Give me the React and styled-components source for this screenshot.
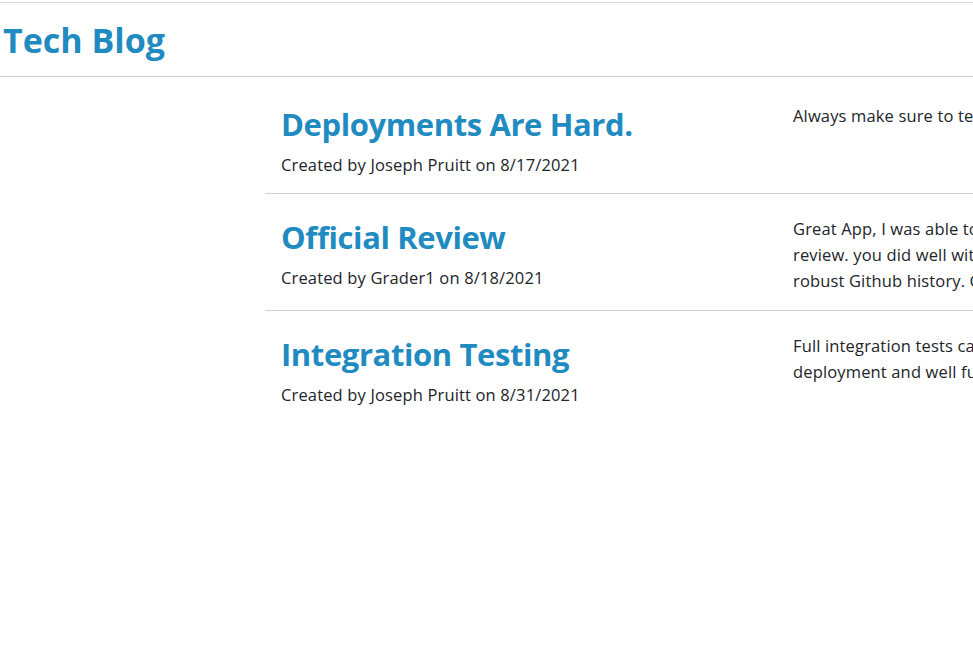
import React from "react";
import styled, { createGlobalStyle } from "styled-components";

const Global = createGlobalStyle`
  html, body { margin: 0; padding: 0; overflow: hidden; background: #fff; }
  body { font-family: "Open Sans", "Noto Sans", sans-serif; color: #212529; }
`;

const Page = styled.div`
  width: 1300px;
  padding-top: 2px;
`;

const Header = styled.header`
  border-top: 1px solid #dcdcdc;
  border-bottom: 1px solid #d0d0d0;
  height: 73px;
  display: flex;
  align-items: center;
  padding-left: 3px;
`;

const Brand = styled.h1`
  margin: 0;
  font-size: 34px;
  font-weight: 700;
  color: #1f8bc1;
`;

const Main = styled.main`
  display: flex;
  margin-top: 4px;
`;

const Sidebar = styled.aside`
  width: 265px;
  flex: none;
`;

const List = styled.section`
  flex: 1;
`;

const Row = styled.article`
  display: grid;
  grid-template-columns: 496px 1fr;
  column-gap: 16px;
  padding: 18px 16px 16px;
  border-bottom: ${(p) => (p.$last ? "none" : "1px solid #d0d0d0")};
`;

const Title = styled.h2`
  margin: 6px 0 0;
  font-size: 31px;
  line-height: 38px;
  font-weight: 700;
  color: #1f8bc1;
  letter-spacing: -0.4px;
`;

const Meta = styled.p`
  margin: 10px 0 0;
  font-size: 16.5px;
  line-height: 24px;
  letter-spacing: 0.15px;
`;

const Body = styled.p`
  margin: 4px 0 0;
  font-size: 16.5px;
  line-height: 26px;
  letter-spacing: 0.15px;
  width: 484px;
`;

const posts = [
  {
    title: "Deployments Are Hard.",
    author: "Joseph Pruitt",
    date: "8/17/2021",
    body: "Always make sure to test your deployments.",
  },
  {
    title: "Official Review",
    author: "Grader1",
    date: "8/18/2021",
    body: "Great App, I was able to navigate all of the pages during my review. you did well with all of the functionality and have a robust Github history. Great job!",
  },
  {
    title: "Integration Testing",
    author: "Joseph Pruitt",
    date: "8/31/2021",
    body: "Full integration tests can save you a lot of time during deployment and well functioning code.",
  },
];

export default function App() {
  return (
    <>
      <Global />
      <Page>
        <Header>
          <Brand>Tech Blog</Brand>
        </Header>
        <Main>
          <Sidebar />
          <List>
            {posts.map((p, i) => (
              <Row key={p.title} $last={i === posts.length - 1}>
                <div>
                  <Title>{p.title}</Title>
                  <Meta>
                    Created by {p.author} on {p.date}
                  </Meta>
                </div>
                <Body>{p.body}</Body>
              </Row>
            ))}
          </List>
        </Main>
      </Page>
    </>
  );
}
